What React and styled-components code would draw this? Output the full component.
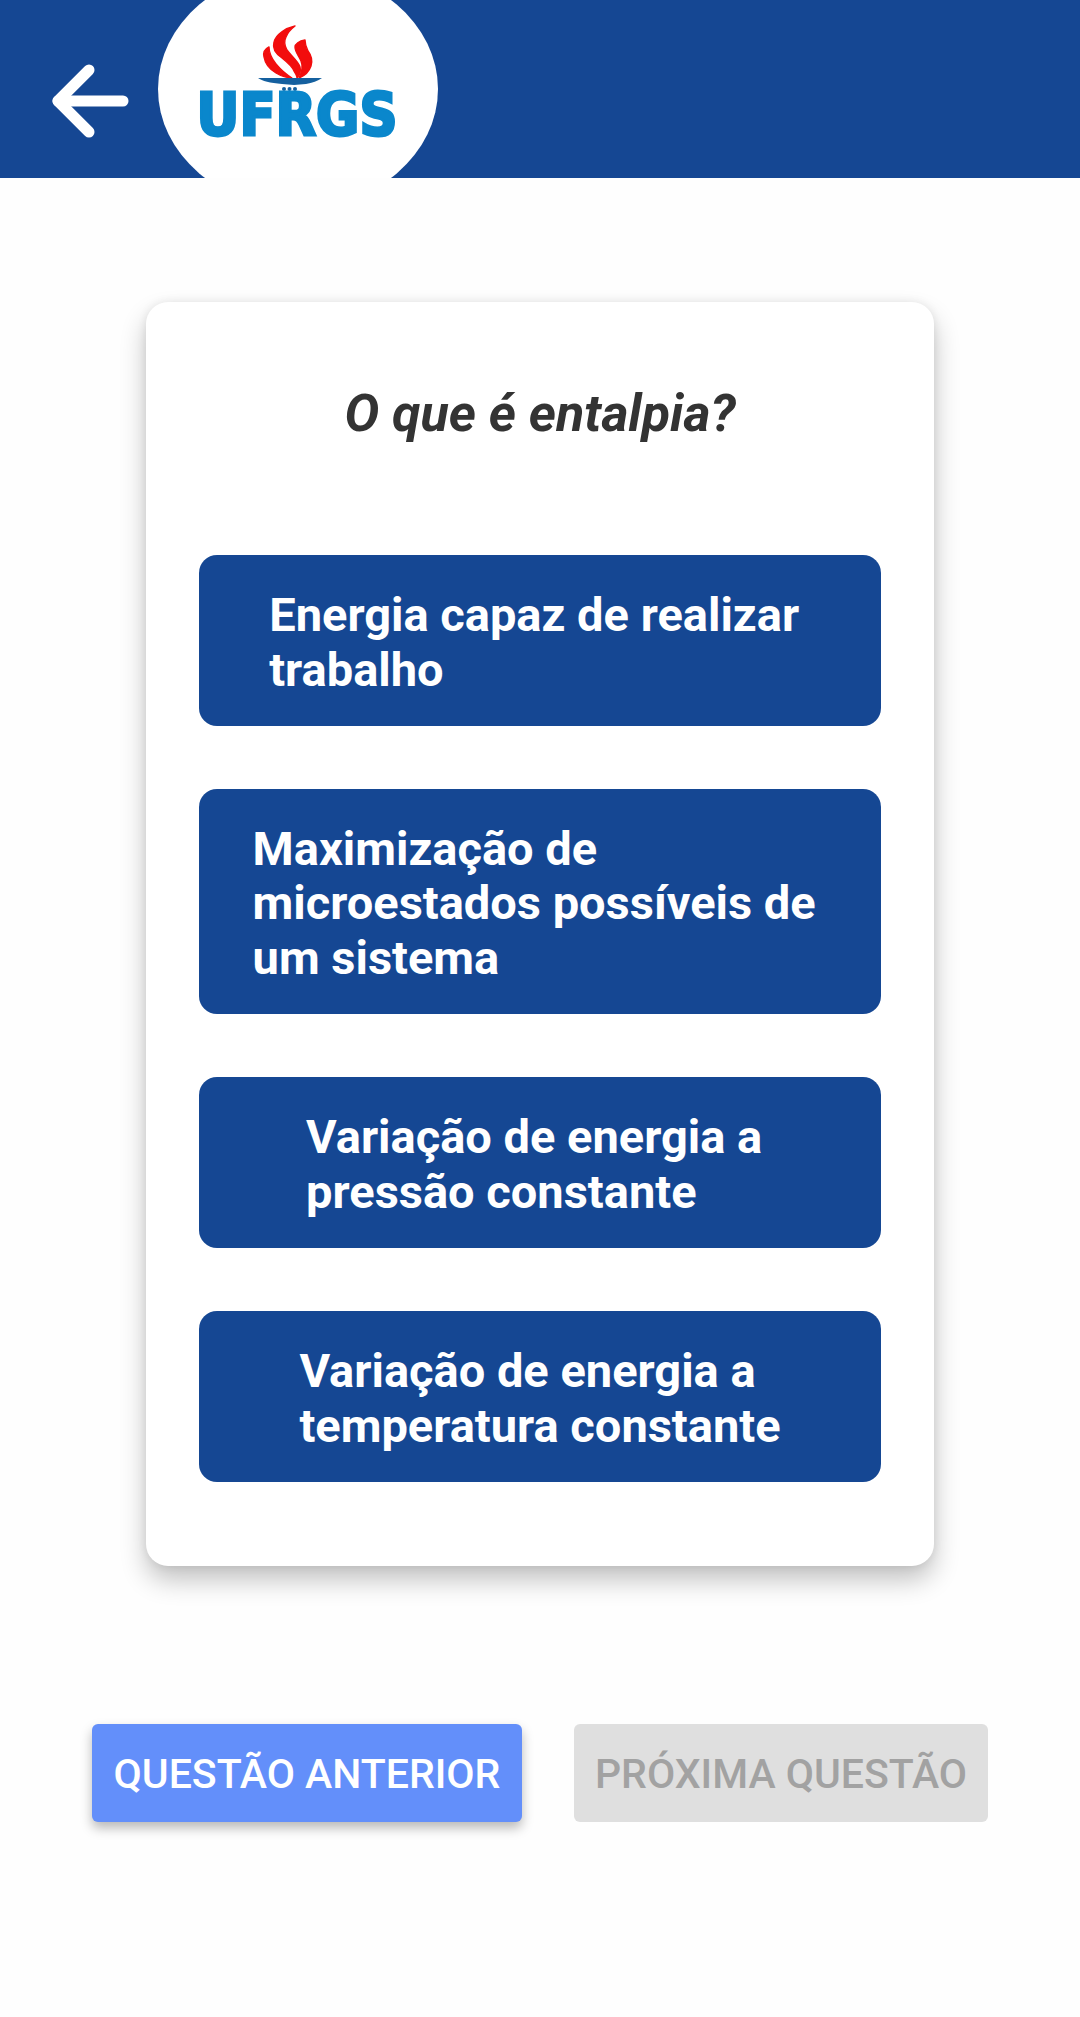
import React from 'react'
import styled, { createGlobalStyle } from 'styled-components'

const GlobalStyle = createGlobalStyle`
  html, body {
    margin: 0;
    padding: 0;
    background: #fefefe;
    font-family: 'Roboto', sans-serif;
  }
`
const Page = styled.div`
  display: flex;
  flex-direction: column;
  width: 1080px;
  height: 2017px;
  overflow: hidden;
`
const Header = styled.header`
  display: flex;
  align-items: center;
  flex-shrink: 0;
  height: 178px;
  padding-left: 51px;
  background: #154793;
  overflow: hidden;
`
const BackButton = styled.button`
  display: flex;
  width: 80px;
  height: 76px;
  padding: 0;
  margin: 24px 27px 0 0;
  border: none;
  background: none;
  cursor: pointer;
`
const LogoShape = styled.div`
  flex-shrink: 0;
  width: 280px;
  height: 238px;
  border-radius: 50%;
  background: #fff;
`
const Main = styled.main`
  display: flex;
  flex-direction: column;
  align-items: center;
  padding-top: 124px;
`
const Card = styled.section`
  display: flex;
  flex-direction: column;
  gap: 63px;
  box-sizing: border-box;
  width: 788px;
  height: 1264px;
  padding: 0 53px;
  background: #fff;
  border-radius: 22px;
  box-shadow: 0 14px 26px rgba(0, 0, 0, 0.24), 0 0 10px rgba(0, 0, 0, 0.08);
`
const Question = styled.h1`
  height: 190px;
  margin: 0;
  padding-top: 82px;
  box-sizing: border-box;
  font-size: 52px;
  line-height: 60px;
  font-weight: 700;
  font-style: italic;
  text-align: center;
  color: #333;
`
const Option = styled.button`
  display: flex;
  align-items: center;
  justify-content: center;
  width: 682px;
  height: ${p => p.$lines === 3 ? 225 : 171}px;
  padding: 4px 0 0;
  background: #154793;
  border: none;
  border-radius: 18px;
  cursor: pointer;
`
const OptionText = styled.span`
  font-family: 'Roboto', sans-serif;
  font-size: 47px;
  line-height: 54.6px;
  font-weight: 700;
  color: #fff;
  text-align: left;
  white-space: pre;
`
const Footer = styled.div`
  display: flex;
  gap: 52px;
  align-self: flex-start;
  margin-top: 158px;
  padding-left: 92px;
`
const NavButton = styled.button`
  width: ${p => p.$width}px;
  height: 98px;
  padding: 2px 0 0;
  font-family: 'Roboto', sans-serif;
  font-size: 41px;
  font-weight: 500;
  border: none;
  border-radius: 6px;
  background: ${p => p.disabled ? '#dfdfdf' : '#638ffa'};
  color: ${p => p.disabled ? '#a2a2a2' : '#fff'};
  box-shadow: ${p => p.disabled ? 'none' : '0 6px 12px rgba(0, 0, 0, 0.28)'};
`

const options = [
  { text: 'Energia capaz de realizar \ntrabalho', lines: 2 },
  { text: 'Maximização de \nmicroestados possíveis de \num sistema', lines: 3 },
  { text: 'Variação de energia a \npressão constante', lines: 2 },
  { text: 'Variação de energia a \ntemperatura constante', lines: 2 },
]

function BackArrow() {
  return (
    <svg width="80" height="76" viewBox="0 0 80 76" fill="none" stroke="#fff" strokeWidth="11" strokeLinecap="round" strokeLinejoin="round">
      <path d="M7 38H72" />
      <path d="M38 7L7 38L38 69" />
    </svg>
  )
}

function Logo() {
  return (
    <svg width="280" height="238" viewBox="158 -30 280 238">
      <g fill="#f20d0d" stroke="#f20d0d" strokeWidth="1.4" strokeLinejoin="round">
        <path d="M295 26C286 28 276 34 274 42C272 49 276 54 282 58C287 62 292 66 294 71C296 74 297 76 297 78C300 75 301 71 300 67C298 61 291 56 287 50C284 45 284 41 286 37C288 32 291 29 295 26Z" />
        <path d="M269 47C265 49 263 53 264 57C265 63 269 69 276 73C281 76 287 78 292 78C287 75 281 70 276 64C272 59 269 54 269 47Z" />
        <path d="M305 40C299 41 295 44 295 47C295 52 299 56 301 61C303 66 302 72 299 78C304 76 309 72 311 66C313 60 311 55 308 51C306 47 305 44 305 40Z" />
      </g>
      <path fill="#15609f" d="M258 78H322C318 81 312 83 306 84L294 85L282 84C270 83 262 81 258 78Z" />
      <g fill="#15609f">
        <circle cx="284" cy="89" r="2" />
        <circle cx="289.5" cy="89" r="2" />
        <circle cx="295" cy="89" r="2" />
      </g>
      <text x="297" y="135" textAnchor="middle" textLength="201" lengthAdjust="spacingAndGlyphs" fontFamily="'DejaVu Sans', sans-serif" fontWeight="700" fontSize="58" fill="#0a87cc" stroke="#0a87cc" strokeWidth="3">UFRGS</text>
    </svg>
  )
}

export default function App() {
  return (
    <Page>
      <GlobalStyle />
      <Header>
        <BackButton aria-label="Voltar">
          <BackArrow />
        </BackButton>
        <LogoShape>
          <Logo />
        </LogoShape>
      </Header>
      <Main>
        <Card>
          <Question>O que é entalpia?</Question>
          {options.map(option => (
            <Option key={option.text} $lines={option.lines}>
              <OptionText>{option.text}</OptionText>
            </Option>
          ))}
        </Card>
        <Footer>
          <NavButton $width={430}>QUESTÃO ANTERIOR</NavButton>
          <NavButton $width={414} disabled>PRÓXIMA QUESTÃO</NavButton>
        </Footer>
      </Main>
    </Page>
  )
}
